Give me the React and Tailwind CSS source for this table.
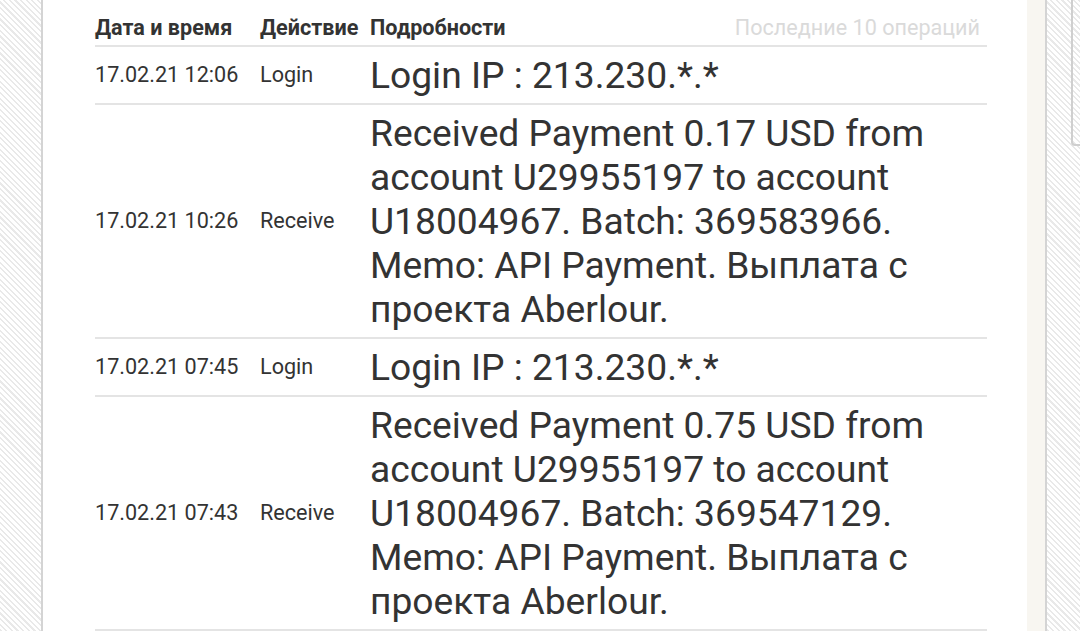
const rows = [
  { date: '17.02.21 12:06', action: 'Login', details: ['Login IP : 213.230.*.*'] },
  {
    date: '17.02.21 10:26',
    action: 'Receive',
    details: [
      'Received Payment 0.17 USD from',
      'account U29955197 to account',
      'U18004967. Batch: 369583966.',
      'Memo: API Payment. Выплата с',
      'проекта Aberlour.',
    ],
  },
  { date: '17.02.21 07:45', action: 'Login', details: ['Login IP : 213.230.*.*'] },
  {
    date: '17.02.21 07:43',
    action: 'Receive',
    details: [
      'Received Payment 0.75 USD from',
      'account U29955197 to account',
      'U18004967. Batch: 369547129.',
      'Memo: API Payment. Выплата с',
      'проекта Aberlour.',
    ],
  },
];

const hatch =
  'bg-[repeating-linear-gradient(45deg,#e9e9e9_0px,#e9e9e9_1.5px,#ffffff_1.5px,#ffffff_4px)]';

export default function App() {
  return (
    <div className="flex h-[631px] w-[1080px] overflow-hidden bg-white font-['Roboto',sans-serif] text-[#333]">
      <div className={`w-[41px] shrink-0 ${hatch}`} />
      <div className="w-[2px] shrink-0 bg-[#d4d4d4]" />

      <div className="flex-1 pl-[52px] pr-[40px]">
        <div className="grid grid-cols-[165px_110px_1fr] items-center border-b-2 border-[#e4e4e4] pt-[14px] pb-[4px] text-[21.6px] leading-[27px]">
          <div className="font-bold">Дата и время</div>
          <div className="font-bold">Действие</div>
          <div className="flex justify-between">
            <span className="font-bold">Подробности</span>
            <span className="pr-[7px] text-[#dadada]">Последние 10 операций</span>
          </div>
        </div>

        {rows.map((r, i) => (
          <div
            key={i}
            className="grid grid-cols-[165px_110px_1fr] items-center border-b-2 border-[#e4e4e4] py-[6px]"
          >
            <div className="text-[21.6px]">{r.date}</div>
            <div className="text-[21.6px]">{r.action}</div>
            <div className="text-[37.2px] leading-[44px]">
              {r.details.map((line, j) => (
                <div key={j}>{line}</div>
              ))}
            </div>
          </div>
        ))}
      </div>

      <div className="w-[18px] shrink-0 bg-[#f8f6f1]" />
      <div className="w-[2px] shrink-0 bg-[#d4d4d4]" />
      <div className={`relative w-[33px] shrink-0 ${hatch}`}>
        <div className="absolute right-0 top-0 h-[146px] w-[9px] rounded-bl-[4px] border-b-2 border-l-2 border-[#cfcfcf]" />
      </div>
    </div>
  );
}
